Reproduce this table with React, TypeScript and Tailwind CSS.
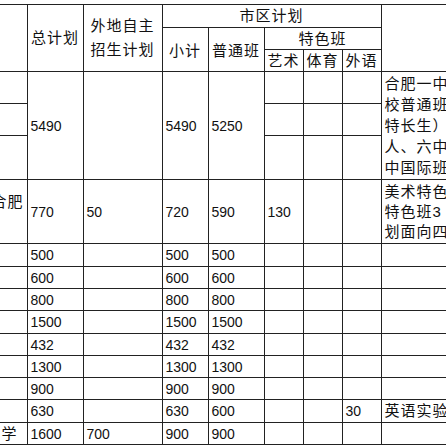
const font = { fontFamily: '"Liberation Sans", "Noto Sans CJK SC", sans-serif' };

const cell = "border border-[#222] p-0 align-middle";
const num = "px-[3px] text-left text-[14px]";
const zh = "text-[15px] tracking-[1px]";

const rows: Array<{ first?: string; total: string; outside?: string; sub: string; normal: string; h: string; lang?: string; note?: string }> = [
  { total: "500", sub: "500", normal: "500", h: "h-[23px]" },
  { total: "600", sub: "600", normal: "600", h: "h-[22px]" },
  { total: "800", sub: "800", normal: "800", h: "h-[22px]" },
  { total: "1500", sub: "1500", normal: "1500", h: "h-[23px]" },
  { total: "432", sub: "432", normal: "432", h: "h-[22px]" },
  { total: "1300", sub: "1300", normal: "1300", h: "h-[22px]" },
  { total: "900", sub: "900", normal: "900", h: "h-[22px]" },
  { total: "630", sub: "630", normal: "600", h: "h-[23px]", lang: "30", note: "英语实验班" },
  { first: "学", total: "1600", outside: "700", sub: "900", normal: "900", h: "h-[22px]" },
];

function Clip({ text, pr }: { text: string; pr: string }) {
  return (
    <div className={`flex justify-end overflow-hidden whitespace-nowrap ${pr} ${zh}`}>
      <span>{text}</span>
    </div>
  );
}

function Note({ lines, leading }: { lines: string[]; leading: string }) {
  return (
    <div className={`overflow-hidden whitespace-nowrap pl-[3px] text-left ${zh} ${leading}`}>
      {lines.map((l) => (
        <div key={l}>{l}</div>
      ))}
    </div>
  );
}

export default function App() {
  return (
    <div className="h-[446px] w-[446px] overflow-hidden bg-white pt-[4px] text-[#111]" style={font}>
      <table className="table-fixed border-collapse w-[500px] leading-[16px]">
        <colgroup>
          <col className="w-[27px]" />
          <col className="w-[56px]" />
          <col className="w-[79px]" />
          <col className="w-[46px]" />
          <col className="w-[56px]" />
          <col className="w-[39px]" />
          <col className="w-[39px]" />
          <col className="w-[39px]" />
          <col className="w-[119px]" />
        </colgroup>
        <thead>
          <tr className="h-[23px]">
            <th rowSpan={3} className={`${cell} border-l-0`}></th>
            <th rowSpan={3} className={`${cell} font-normal ${zh}`}>总计划</th>
            <th rowSpan={3} className={`${cell} font-normal ${zh} leading-[24px]`}>
              外地自主
              <br />
              招生计划
            </th>
            <th colSpan={5} className={`${cell} font-normal ${zh}`}>市区计划</th>
            <th rowSpan={3} className={`${cell} border-r-0`}></th>
          </tr>
          <tr className="h-[22px]">
            <th rowSpan={2} className={`${cell} font-normal ${zh} pt-[3px]`}>小计</th>
            <th rowSpan={2} className={`${cell} font-normal ${zh} pt-[3px]`}>普通班</th>
            <th colSpan={3} className={`${cell} font-normal ${zh}`}>特色班</th>
          </tr>
          <tr className="h-[22px]">
            <th className={`${cell} font-normal ${zh}`}>艺术</th>
            <th className={`${cell} font-normal ${zh}`}>体育</th>
            <th className={`${cell} font-normal ${zh}`}>外语</th>
          </tr>
        </thead>
        <tbody>
          <tr className="h-[32px]">
            <td className={`${cell} border-l-0`}></td>
            <td rowSpan={3} className={`${cell} ${num}`}>5490</td>
            <td rowSpan={3} className={cell}></td>
            <td rowSpan={3} className={`${cell} ${num}`}>5490</td>
            <td rowSpan={3} className={`${cell} ${num}`}>5250</td>
            <td className={cell}></td>
            <td className={cell}></td>
            <td className={cell}></td>
            <td rowSpan={3} className={`${cell} border-r-0`}>
              <Note lines={["合肥一中", "校普通班", "特长生）", "人、六中", "中国际班"]} leading="leading-[21px]" />
            </td>
          </tr>
          <tr className="h-[32px]">
            <td className={`${cell} border-l-0`}></td>
            <td className={cell}></td>
            <td className={cell}></td>
            <td className={cell}></td>
          </tr>
          <tr className="h-[44px]">
            <td className={`${cell} border-l-0`}></td>
            <td className={cell}></td>
            <td className={cell}></td>
            <td className={cell}></td>
          </tr>
          <tr className="h-[64px]">
            <td className={`${cell} border-l-0`}>
              <div className="leading-[20px]">
                <Clip text="合肥" pr="pr-[3px]" />
                <div>&nbsp;</div>
              </div>
            </td>
            <td className={`${cell} ${num}`}>770</td>
            <td className={`${cell} ${num}`}>50</td>
            <td className={`${cell} ${num}`}>720</td>
            <td className={`${cell} ${num}`}>590</td>
            <td className={`${cell} ${num}`}>130</td>
            <td className={cell}></td>
            <td className={cell}></td>
            <td className={`${cell} border-r-0`}>
              <Note lines={["美术特色", "特色班3", "划面向四"]} leading="leading-[20px]" />
            </td>
          </tr>
          {rows.map((r) => (
            <tr key={r.total} className={r.h}>
              <td className={`${cell} border-l-0`}>{r.first && <Clip text={r.first} pr="pr-[9px]" />}</td>
              <td className={`${cell} ${num}`}>{r.total}</td>
              <td className={`${cell} ${num}`}>{r.outside}</td>
              <td className={`${cell} ${num}`}>{r.sub}</td>
              <td className={`${cell} ${num}`}>{r.normal}</td>
              <td className={cell}></td>
              <td className={cell}></td>
              <td className={`${cell} ${num}`}>{r.lang}</td>
              <td className={`${cell} border-r-0`}>
                {r.note && <Note lines={[r.note]} leading="leading-[20px]" />}
              </td>
            </tr>
          ))}
        </tbody>
      </table>
    </div>
  );
}
